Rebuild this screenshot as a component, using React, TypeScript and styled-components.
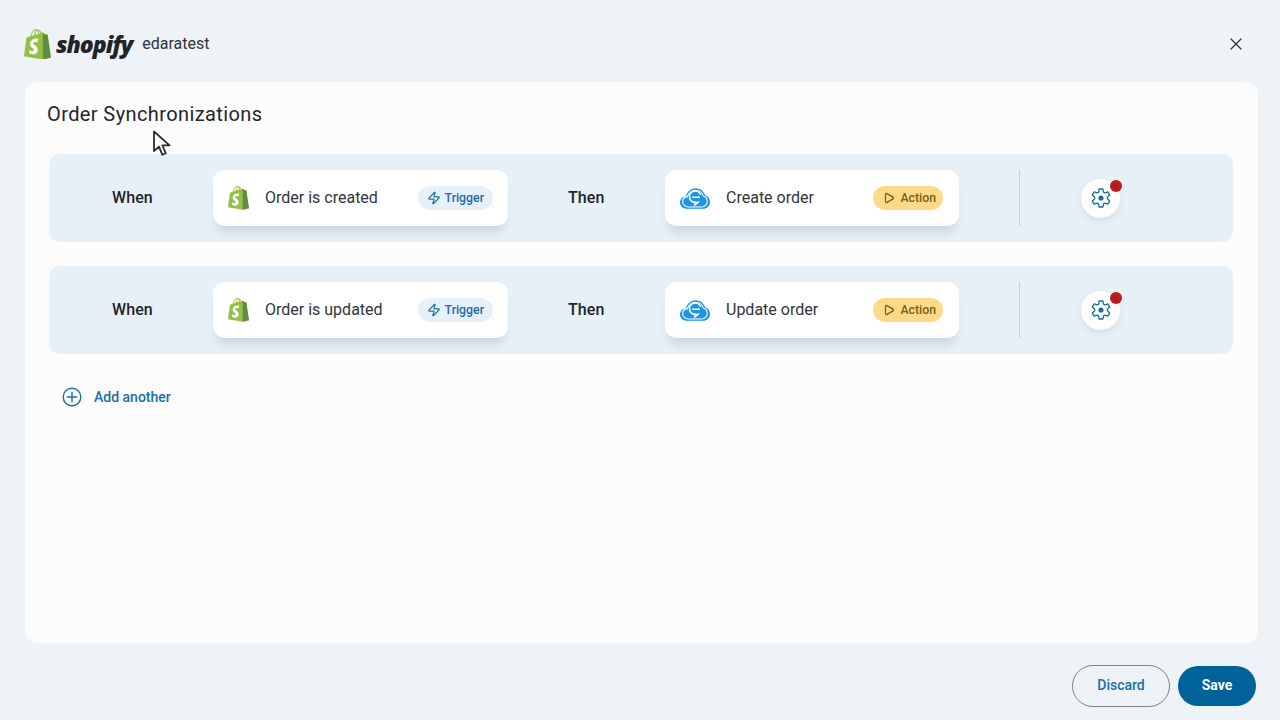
import React from 'react'
import styled, { createGlobalStyle } from 'styled-components'
import { Play, X, Zap } from 'lucide-react'

const GlobalStyle = createGlobalStyle`
  html, body {
    margin: 0;
    padding: 0;
    background: #eef3f7;
    font-family: Roboto, "Liberation Sans", sans-serif;
  }
`

const Page = styled.div`
  position: relative;
  width: 1280px;
  height: 720px;
  display: flex;
  flex-direction: column;
  overflow: hidden;
  background: #eef3f7;
`

const Header = styled.header`
  height: 82px;
  flex: none;
  display: flex;
  align-items: center;
  padding: 6px 34px 0 24px;
  box-sizing: border-box;
`

const Brand = styled.div`
  display: flex;
  align-items: center;
`

const Wordmark = styled.span`
  margin-left: 5px;
  font-family: "Open Sans", sans-serif;
  font-size: 23px;
  font-weight: 800;
  font-style: italic;
  letter-spacing: -1px;
  color: #1f2429;
`

const StoreName = styled.span`
  margin-left: 10px;
  padding-bottom: 2px;
  font-size: 16px;
  color: #2f343a;
`

const CloseButton = styled.button`
  margin-left: auto;
  padding: 0;
  display: flex;
  border: 0;
  background: none;
  color: #30353a;
`

const Card = styled.main`
  width: 1233px;
  height: 561px;
  margin-left: 25px;
  flex: none;
  padding: 20px 25px 0 24px;
  box-sizing: border-box;
  border-radius: 12px;
  background: #fdfcfc;
`

const Title = styled.h1`
  margin: 0 0 28px -2px;
  font-size: 20px;
  line-height: 24px;
  font-weight: 400;
  letter-spacing: 0.4px;
  color: #1e2530;
`

const Rows = styled.div`
  display: flex;
  flex-direction: column;
  gap: 24px;
`

const Row = styled.section`
  height: 88px;
  display: flex;
  align-items: center;
  border-radius: 10px;
  background: #e8f0f7;
`

const Word = styled.div<{ $width: number; $inset: number }>`
  width: ${(p) => p.$width}px;
  flex: none;
  padding: 0 0 2px ${(p) => p.$inset}px;
  box-sizing: border-box;
  font-size: 16px;
  font-weight: 500;
  letter-spacing: 0.1px;
  color: #20252b;
`

const Step = styled.div<{ $width: number }>`
  width: ${(p) => p.$width}px;
  height: 56px;
  flex: none;
  display: flex;
  align-items: center;
  padding: 0 15px;
  box-sizing: border-box;
  border-radius: 12px;
  background: #fff;
  box-shadow: 0 10px 10px -4px rgba(120, 140, 160, 0.28);
`

const StepLabel = styled.span`
  margin-left: 16px;
  padding-bottom: 2px;
  font-size: 16px;
  color: #30353c;
`

const Badge = styled.span<{ $kind: 'trigger' | 'action' }>`
  margin-left: auto;
  margin-right: ${(p) => (p.$kind === 'trigger' ? 0 : 1)}px;
  height: 24px;
  display: flex;
  align-items: center;
  gap: ${(p) => (p.$kind === 'trigger' ? 4 : 5)}px;
  padding: ${(p) => (p.$kind === 'trigger' ? '0 9px 1px 9px' : '0 7px 1px 10px')};
  box-sizing: border-box;
  border-radius: 12px;
  font-size: 12.3px;
  font-weight: 500;
  color: ${(p) => (p.$kind === 'trigger' ? '#1b6ca3' : '#7b5d16')};
  background: ${(p) => (p.$kind === 'trigger' ? '#e6f0f8' : '#fdd98a')};
`

const Divider = styled.div`
  width: 1px;
  height: 56px;
  margin-left: 60px;
  flex: none;
  background: #cfcfd2;
`

const GearButton = styled.button`
  position: relative;
  width: 39px;
  height: 39px;
  margin-left: 61px;
  flex: none;
  padding: 0;
  display: flex;
  align-items: center;
  justify-content: center;
  border: 0;
  border-radius: 50%;
  background: #fdfdfd;
  box-shadow: 0 3px 6px rgba(130, 150, 170, 0.2);
`

const Dot = styled.span`
  position: absolute;
  top: 1px;
  right: -2px;
  width: 12px;
  height: 12px;
  border-radius: 50%;
  background: #b71c1c;
`

const AddAnother = styled.button`
  margin: 33px 0 0 13px;
  padding: 0;
  display: flex;
  align-items: center;
  gap: 12px;
  border: 0;
  background: none;
  font-family: inherit;
  font-size: 14px;
  font-weight: 500;
  color: #1a6fa8;
`

const Footer = styled.footer`
  flex: 1;
  display: flex;
  align-items: center;
  justify-content: flex-end;
  gap: 8px;
  padding: 9px 24px 0 0;
  box-sizing: border-box;
`

const Discard = styled.button`
  width: 98px;
  height: 42px;
  padding: 0 0 2px;
  border: 1px solid #7e8387;
  border-radius: 21px;
  background: none;
  font-family: inherit;
  font-size: 14px;
  font-weight: 500;
  color: #1a6fa8;
`

const Save = styled.button`
  width: 78px;
  height: 40px;
  padding: 0 0 2px;
  border: 0;
  border-radius: 20px;
  background: #00629b;
  font-family: inherit;
  font-size: 14px;
  font-weight: 700;
  color: #fff;
`

const Cursor = styled.svg`
  position: absolute;
  left: 152px;
  top: 130px;
`

function ShopifyBag({ width }: { width: number }) {
  return (
    <svg width={width} viewBox="0 0 109.5 124.5" style={{ flex: 'none' }}>
      <path
        fill="#95bf47"
        d="M95.9 23.9c-.1-.6-.6-1-1.1-1-.5 0-9.3-.2-9.3-.2s-7.4-7.2-8.1-7.9c-.7-.7-2.2-.5-2.7-.3 0 0-1.4.4-3.7 1.1-.4-1.3-1-2.8-1.8-4.4-2.6-5-6.5-7.7-11.1-7.7-.3 0-.6 0-1 .1-.1-.2-.3-.3-.4-.5C54.7.9 52.1-.1 49 0c-6 .2-12 4.5-16.8 12.2-3.4 5.4-6 12.2-6.8 17.5-6.9 2.1-11.7 3.6-11.8 3.7-3.5 1.1-3.6 1.2-4 4.5-.3 2.5-9.5 73-9.5 73l76.4 13.2 33.1-8.2c-.1-.1-13.6-91.4-13.7-92zm-28.7-7.1c-1.8.5-3.8 1.2-5.9 1.8 0-3-.4-7.3-1.8-10.9 4.6.9 6.8 6 7.7 9.1zm-10 3.1c-4 1.2-8.4 2.6-12.8 3.9 1.2-4.7 3.6-9.4 6.4-12.5 1.1-1.1 2.6-2.4 4.3-3.2 1.8 3.5 2.2 8.4 2.1 11.8zM49.1 4c1.4 0 2.6.3 3.6.9-1.6.8-3.2 2.1-4.7 3.6-3.8 4.1-6.7 10.5-7.9 16.6-3.6 1.1-7.2 2.2-10.5 3.2C31.7 18.8 39.8 4.3 49.1 4z"
      />
      <path
        fill="#5e8e3e"
        d="M94.8 22.9c-.5 0-9.3-.2-9.3-.2s-7.4-7.2-8.1-7.9c-.3-.3-.6-.4-1-.5V124l33.1-8.2s-13.5-91.3-13.6-92c-.1-.6-.6-.9-1.1-.9z"
      />
      <path
        fill="#fff"
        d="M58 39.9l-3.8 14.4s-4.3-2-9.4-1.6c-7.5.5-7.5 5.2-7.5 6.4.4 6.4 17.3 7.8 18.3 22.9.7 11.9-6.3 20-16.4 20.6-12.2.8-18.9-6.4-18.9-6.4l2.6-11s6.7 5.1 12.1 4.7c3.5-.2 4.8-3.1 4.7-5.1-.5-8.4-14.3-7.9-15.2-21.7-.7-11.6 6.9-23.4 23.7-24.4 6.4-.5 9.8 1.2 9.8 1.2z"
      />
    </svg>
  )
}

function CloudLogo() {
  const cloud =
    'M8 20.5C3.8 20.5 1 17.8 1 14.5c0-3.2 2.5-5.6 5.6-6C8 3.9 11.6 1 16 1c4.3 0 7.8 2.8 8.8 6.7 2.6.7 4.7 3.2 4.7 6.3 0 3.6-2.8 6.5-6.5 6.5H8z'
  return (
    <svg width={30} height={21} viewBox="1 1 28.5 19.5" style={{ flex: 'none' }}>
      <path d={cloud} fill="#1b97e6" />
      <path
        d={cloud}
        fill="none"
        stroke="#fff"
        strokeWidth={1.2}
        transform="translate(2.7 2) scale(0.82)"
      />
      <path
        d="M20.5 7.2A5.4 5.4 0 1 0 16 14.4l-1.4 2.8 4.6-3.4M12.6 9.6h7.2"
        fill="none"
        stroke="#fff"
        strokeWidth={1.5}
      />
    </svg>
  )
}

function PlusCircle() {
  return (
    <svg width={20} height={20} viewBox="0 0 20 20" fill="none" stroke="currentColor" strokeWidth={1.4}>
      <circle cx={10} cy={10} r={8.8} />
      <path d="M4.8 10h10.4M10 4.8v10.4" />
    </svg>
  )
}

// six flat teeth around the ring
function cogPath(cx: number, cy: number) {
  const points: string[] = []
  for (let i = 0; i < 6; i++) {
    const a = (i * Math.PI) / 3 - Math.PI / 2
    const at = (r: number, d: number) =>
      `${(cx + r * Math.cos(a + d)).toFixed(2)} ${(cy + r * Math.sin(a + d)).toFixed(2)}`
    points.push(at(6.4, -0.4), at(9.2, -0.2), at(9.2, 0.2), at(6.4, 0.4))
  }
  return `M${points.join('L')}Z`
}

function Gear() {
  return (
    <svg width={20} height={20} viewBox="0 0 20 20">
      <path d={cogPath(10, 10)} fill="none" stroke="#1b6ca3" strokeWidth={1.3} strokeLinejoin="round" />
      <circle cx={10} cy={10} r={2.6} fill="#1b6ca3" />
    </svg>
  )
}

type Sync = { trigger: string; action: string }

const syncs: Sync[] = [
  { trigger: 'Order is created', action: 'Create order' },
  { trigger: 'Order is updated', action: 'Update order' }
]

function App() {
  return (
    <Page>
      <GlobalStyle />
      <Header>
        <Brand>
          <ShopifyBag width={27} />
          <Wordmark>shopify</Wordmark>
          <StoreName>edaratest</StoreName>
        </Brand>
        <CloseButton aria-label="Close">
          <X size={20} strokeWidth={1.5} />
        </CloseButton>
      </Header>
      <Card>
        <Title>Order Synchronizations</Title>
        <Rows>
          {syncs.map((sync) => (
            <Row key={sync.trigger}>
              <Word $width={164} $inset={63}>When</Word>
              <Step $width={295}>
                <ShopifyBag width={21} />
                <StepLabel>{sync.trigger}</StepLabel>
                <Badge $kind="trigger">
                  <Zap size={14} strokeWidth={2} />
                  Trigger
                </Badge>
              </Step>
              <Word $width={157} $inset={60}>Then</Word>
              <Step $width={294}>
                <CloudLogo />
                <StepLabel>{sync.action}</StepLabel>
                <Badge $kind="action">
                  <Play size={12} strokeWidth={2.6} />
                  Action
                </Badge>
              </Step>
              <Divider />
              <GearButton aria-label="Settings">
                <Gear />
                <Dot />
              </GearButton>
            </Row>
          ))}
        </Rows>
        <AddAnother>
          <PlusCircle />
          Add another
        </AddAnother>
      </Card>
      <Footer>
        <Discard>Discard</Discard>
        <Save>Save</Save>
      </Footer>
      <Cursor width={20} height={28} viewBox="0 0 20 28">
        <path
          d="M2 1.5V21l5-4.4 3.4 8.2 3.4-1.5-3.4-8H17.6L2 1.5z"
          fill="#fff"
          stroke="#2b2f33"
          strokeWidth={1.8}
          strokeLinejoin="round"
        />
      </Cursor>
    </Page>
  )
}

export default App
